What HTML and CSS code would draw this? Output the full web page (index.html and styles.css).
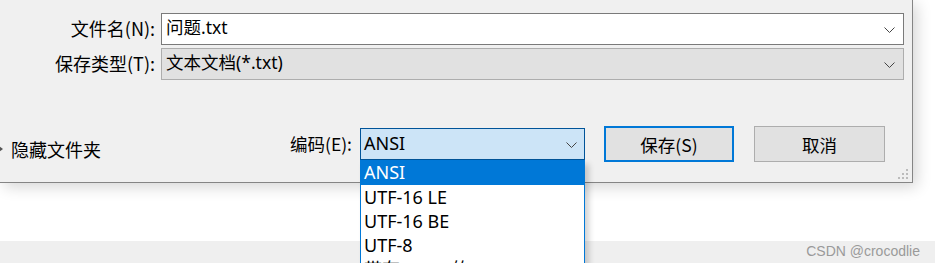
FILE: index.html
```html
<!DOCTYPE html>
<html lang="zh-CN">
<head>
<meta charset="utf-8">
<title>保存</title>
<link rel="stylesheet" href="styles.css">
</head>
<body>
<div class="page">
  <div class="dialog">
    <div class="fields">
      <label class="label">文件名(N):</label>
      <div class="combo combo-edit"><span class="value">问题.txt</span>
        <svg class="chev" width="11" height="6" viewBox="0 0 11 6"><path d="M0.5 0.5 L5.5 5.5 L10.5 0.5" fill="none" stroke="#444" stroke-width="1"/></svg>
      </div>
      <label class="label">保存类型(T):</label>
      <div class="combo combo-type"><span class="value">文本文档(*.txt)</span>
        <svg class="chev" width="11" height="6" viewBox="0 0 11 6"><path d="M0.5 0.5 L5.5 5.5 L10.5 0.5" fill="none" stroke="#444" stroke-width="1"/></svg>
      </div>
    </div>
    <div class="bottom">
      <div class="hide-folders">
        <svg class="tri" width="5" height="6" viewBox="0 0 5 6"><path d="M0 0 L4 3 L0 6 Z" fill="#555"/></svg>
        <span>隐藏文件夹</span>
      </div>
      <label class="enc-label">编码(E):</label>
      <div class="combo combo-enc"><span class="value">ANSI</span>
        <svg class="chev" width="11" height="6" viewBox="0 0 11 6"><path d="M0.5 0.5 L5.5 5.5 L10.5 0.5" fill="none" stroke="#444" stroke-width="1"/></svg>
      </div>
      <button class="btn btn-default">保存(S)</button>
      <button class="btn btn-cancel">取消</button>
    </div>
    <svg class="grip" width="10" height="10" viewBox="0 0 10 10">
      <rect x="8" y="0" width="2" height="2" fill="#bcbcbc"/>
      <rect x="4" y="4" width="2" height="2" fill="#bcbcbc"/>
      <rect x="8" y="4" width="2" height="2" fill="#bcbcbc"/>
      <rect x="0" y="8" width="2" height="2" fill="#bcbcbc"/>
      <rect x="4" y="8" width="2" height="2" fill="#bcbcbc"/>
      <rect x="8" y="8" width="2" height="2" fill="#bcbcbc"/>
    </svg>
  </div>
  <div class="below"></div>
  <div class="strip"><span class="watermark">CSDN @crocodlie</span></div>
  <ul class="dropdown">
    <li class="selected">ANSI</li>
    <li>UTF-16 LE</li>
    <li>UTF-16 BE</li>
    <li>UTF-8</li>
    <li>带有 BOM 的 UTF-8</li>
  </ul>
</div>
</body>
</html>
```
FILE: styles.css
```css
* { box-sizing: border-box; }
html, body { margin: 0; padding: 0; background: #fff; overflow: hidden; }
body {
  width: 935px;
  height: 263px;
  font-family: "Noto Sans", "Noto Sans CJK SC", sans-serif;
  font-size: 17px;
  color: #000;
}
.page { position: relative; width: 935px; height: 263px; display: flex; flex-direction: column; overflow: hidden; }

.dialog {
  position: relative;
  flex: none;
  width: 913px;
  height: 183px;
  background: #f0f0f0;
  border-right: 1px solid #858585;
  border-bottom: 1px solid #858585;
  box-shadow: 4px 4px 14px rgba(0,0,0,0.16);
  padding-top: 13px;
  z-index: 1;
}

.fields {
  display: grid;
  grid-template-columns: 161px 743px;
  grid-auto-rows: 32px;
  row-gap: 3px;
}
.label {
  text-align: right;
  padding-right: 6px;
  line-height: 30px;
  font-family: "Noto Sans CJK SC", sans-serif;
  font-size: 18px;
  white-space: nowrap;
}

.combo {
  position: relative;
  display: flex;
  align-items: center;
  height: 32px;
  padding-left: 4px;
  line-height: 1;
}
.combo .value { font-family: "Noto Sans", "Noto Sans CJK SC", sans-serif; font-size: 17.5px; position: relative; top: -1px; }
.combo .chev { position: absolute; right: 8px; top: 13px; }
.combo-edit { background: #fff; border: 1px solid #7a7a7a; }
.combo-type { background: #e1e1e1; border: 1px solid #adadad; }

.bottom {
  display: flex;
  align-items: center;
  margin-top: 46px;
  height: 36px;
}
.hide-folders {
  flex: none;
  width: 270px;
  display: flex;
  align-items: center;
  gap: 7px;
  position: relative;
  top: 5px;
  font-family: "Noto Sans CJK SC", sans-serif;
  font-size: 18px;
  white-space: nowrap;
}
.hide-folders .tri { margin-left: -1px; }
.enc-label {
  flex: none;
  width: 90px;
  text-align: right;
  padding-right: 8px;
  font-family: "Noto Sans CJK SC", sans-serif;
  font-size: 17.5px;
  white-space: nowrap;
  position: relative;
  top: -1px;
}
.combo-enc {
  flex: none;
  width: 225px;
  background: #cce4f7;
  border: 1px solid #005499;
  padding-left: 3px;
}
.combo-enc .value { font-size: 18px; }
.combo-enc .chev { right: 7px; }

.btn {
  flex: none;
  height: 36px;
  background: #e1e1e1;
  border: 1px solid #adadad;
  font-family: "Noto Sans CJK SC", sans-serif;
  font-size: 17.5px;
  color: #000;
  padding: 0;
  margin: 0;
}
.btn-default { width: 130px; margin-left: 19px; border: 2px solid #0078d7; }
.btn-cancel { width: 131px; margin-left: 20px; }

.grip { position: absolute; right: 4px; bottom: 3px; }

.below { flex: none; height: 58px; background: #fff; }
.strip {
  flex: 1;
  background: #efefef;
  display: flex;
  justify-content: flex-end;
  align-items: center;
  padding-right: 15px;
}
.watermark {
  font-family: "Liberation Sans", Arial, sans-serif;
  font-size: 14px;
  color: #9a9a9a;
  position: relative;
  top: -1px;
}

.dropdown {
  position: absolute;
  left: 360px;
  top: 160px;
  width: 225px;
  height: 120px;
  margin: 0;
  padding: 0;
  list-style: none;
  background: #fff;
  border: 1px solid #0078d7;
  border-top: none;
  box-shadow: 4px 4px 6px rgba(0,0,0,0.18);
  z-index: 2;
}
.dropdown li {
  height: 24px;
  line-height: 24px;
  padding-left: 3px;
  font-family: "Noto Sans", "Noto Sans CJK SC", sans-serif;
  font-size: 18px;
  white-space: nowrap;
}
.dropdown li.selected { background: #0078d7; color: #fff; height: 25px; }
```
